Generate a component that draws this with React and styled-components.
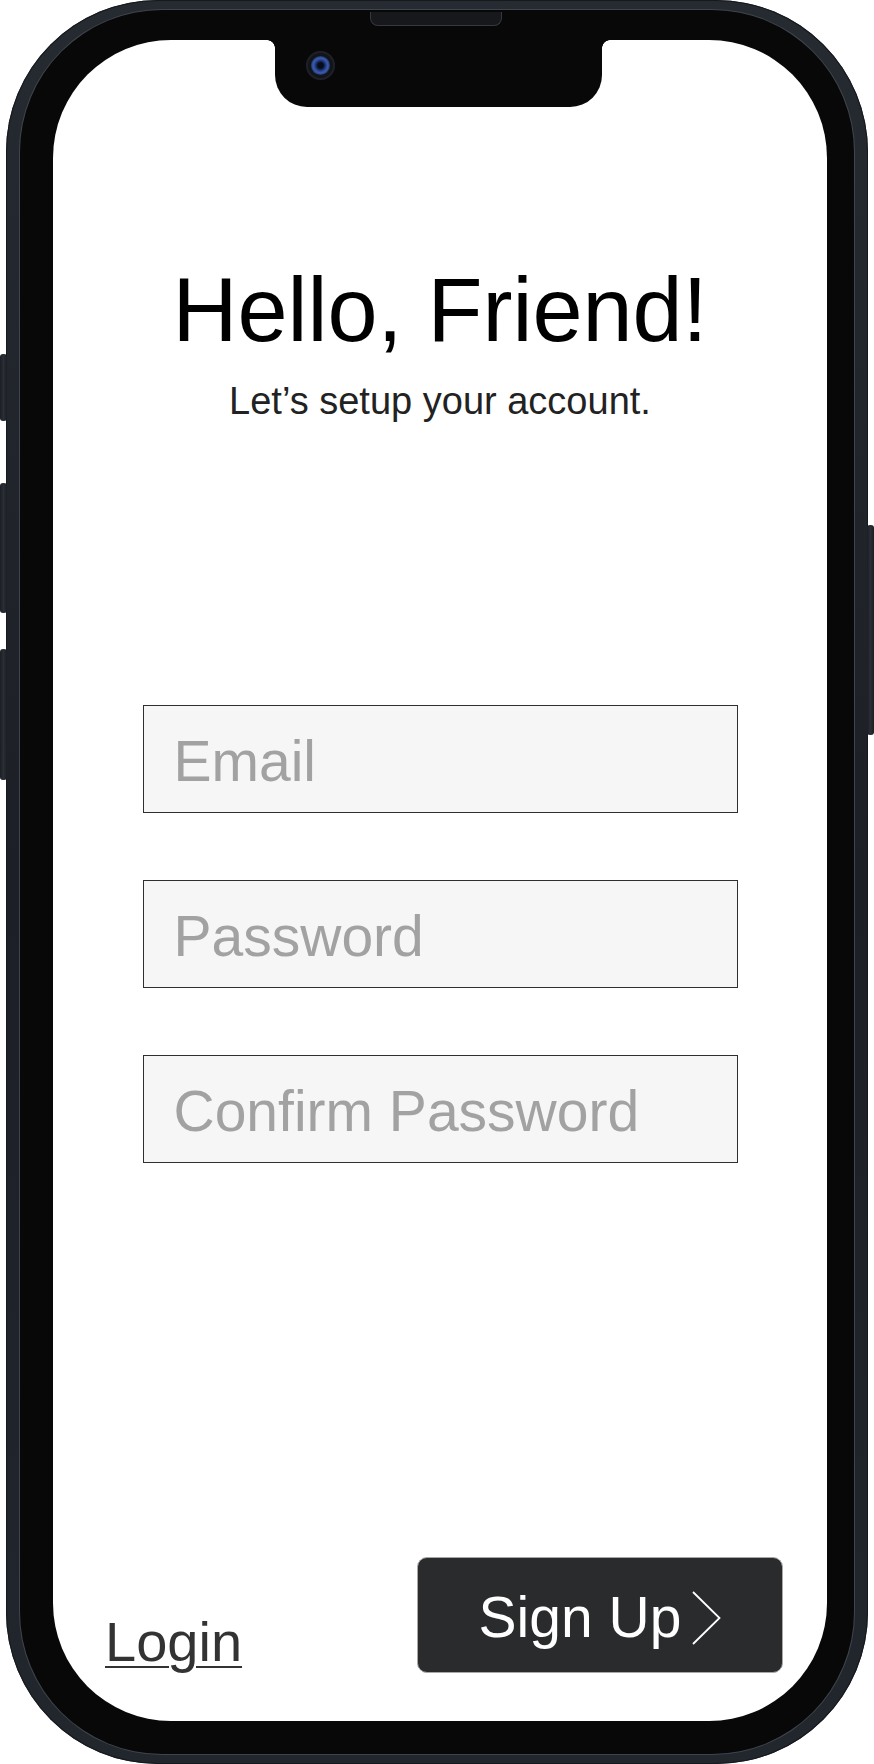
import React from "react";
import styled, { createGlobalStyle } from "styled-components";

const GlobalStyle = createGlobalStyle`
  html, body {
    margin: 0;
    padding: 0;
    background: #ffffff;
  }
  body {
    font-family: "Liberation Sans", Arial, Helvetica, sans-serif;
  }
  * { box-sizing: border-box; }
`;

const Page = styled.div`
  width: 874px;
  height: 1764px;
  display: flex;
  justify-content: center;
  background: #ffffff;
  overflow: hidden;
`;

const Phone = styled.div`
  position: relative;
  width: 862px;
  height: 1764px;
  border-radius: 152px;
  padding: 10px 14px 10px 14px;
  display: flex;
  background: linear-gradient(180deg, #262a31 0%, #1c2026 50%, #22262d 100%);
  box-shadow: inset 0 0 0 1px #15181c;
`;

const SideButton = styled.div`
  position: absolute;
  top: ${(p) => p.$top}px;
  height: ${(p) => p.$height}px;
  width: 7px;
  ${(p) => (p.$right ? "right: -6px;" : "left: -6px;")}
  border-radius: 3px;
  background: linear-gradient(90deg, #1b1e23, #2a2e35, #1b1e23);
`;

const Speaker = styled.div`
  position: absolute;
  top: 12px;
  left: 364px;
  width: 132px;
  height: 14px;
  border-radius: 0 0 8px 8px;
  background: #17181b;
  border: 1px solid #35383e;
  border-top: none;
  z-index: 3;
`;

const Bezel = styled.div`
  flex: 1;
  display: flex;
  border-radius: 142px;
  background: #080808;
  padding: 30px 27px 33px 33px;
  box-shadow: 0 0 0 1px #40454d;
`;

const Screen = styled.div`
  position: relative;
  flex: 1;
  display: flex;
  flex-direction: column;
  align-items: center;
  background: #ffffff;
  border-radius: 118px;
  padding: 225px 0 48px 0;
`;

const Notch = styled.div`
  position: absolute;
  top: 0;
  left: 222px;
  width: 327px;
  height: 67px;
  background: #080808;
  border-radius: 0 0 32px 32px;

  &::before,
  &::after {
    content: "";
    position: absolute;
    top: 0;
    width: 8px;
    height: 8px;
  }
  &::before {
    left: -8px;
    background: radial-gradient(circle at 0 100%, transparent 7.5px, #080808 8px);
  }
  &::after {
    right: -8px;
    background: radial-gradient(circle at 100% 100%, transparent 7.5px, #080808 8px);
  }
`;

const Camera = styled.div`
  position: absolute;
  left: 31px;
  top: 11px;
  width: 29px;
  height: 29px;
  border-radius: 50%;
  background: #121418;
  box-shadow: inset 0 0 0 2px #1d2026;
  display: flex;
  align-items: center;
  justify-content: center;
`;

const Lens = styled.div`
  width: 19px;
  height: 19px;
  border-radius: 50%;
  background: radial-gradient(circle at 50% 50%, #070b1c 0 20%, #27448e 42%, #3a5db0 55%, #15224a 78%, #080c1a 100%);
`;

const Title = styled.h1`
  margin: 0;
  font-family: "Liberation Sans", Arial, sans-serif;
  font-weight: 400;
  font-size: 90px;
  line-height: 1;
  color: #000000;
`;

const Subtitle = styled.p`
  margin: 27px 0 0 0;
  font-family: "Liberation Sans", Arial, sans-serif;
  font-weight: 400;
  font-size: 38px;
  line-height: 1;
  color: #222222;
`;

const Form = styled.div`
  margin-top: 285px;
  display: flex;
  flex-direction: column;
  gap: 67px;
`;

const Field = styled.div`
  width: 595px;
  height: 108px;
  display: flex;
  align-items: center;
  padding: 5px 0 0 30px;
  background: #f6f6f6;
  border: 1.5px solid #2f2f2f;
  font-family: "Liberation Sans", Arial, sans-serif;
  font-size: 57px;
  line-height: 1;
  color: #a2a2a2;
`;

const Footer = styled.div`
  margin-top: auto;
  align-self: stretch;
  display: flex;
  justify-content: space-between;
  align-items: flex-end;
  padding: 0 44px 0 52px;
`;

const LoginLink = styled.a`
  font-family: "Liberation Sans", Arial, sans-serif;
  font-size: 56px;
  line-height: 1;
  color: #333333;
  text-decoration: underline;
  text-decoration-thickness: 2px;
  text-underline-offset: 5px;
  margin-bottom: 3px;
  cursor: pointer;
`;

const SignUpButton = styled.button`
  width: 366px;
  height: 116px;
  display: flex;
  align-items: center;
  justify-content: center;
  gap: 11px;
  padding: 5px 0 0 0;
  border-radius: 10px;
  border: 1px solid #a8a8a8;
  background: #2a2b2d;
  color: #ffffff;
  font-family: "Liberation Sans", Arial, sans-serif;
  font-size: 57px;
  line-height: 1;
  cursor: pointer;
`;

const Chevron = () => (
  <svg width="29" height="54" viewBox="0 0 29 54" fill="none">
    <polyline points="1,1 27.5,27 1,53" stroke="#ffffff" strokeWidth="1.8" strokeLinejoin="miter" />
  </svg>
);

export default function App() {
  return (
    <>
      <GlobalStyle />
      <Page>
        <Phone>
          <SideButton $top={354} $height={67} />
          <SideButton $top={483} $height={130} />
          <SideButton $top={649} $height={131} />
          <SideButton $right $top={525} $height={210} />
          <Speaker />
          <Bezel>
            <Screen>
              <Notch>
                <Camera>
                  <Lens />
                </Camera>
              </Notch>
              <Title>Hello, Friend!</Title>
              <Subtitle>Let’s setup your account.</Subtitle>
              <Form>
                <Field>Email</Field>
                <Field>Password</Field>
                <Field>Confirm Password</Field>
              </Form>
              <Footer>
                <LoginLink>Login</LoginLink>
                <SignUpButton>
                  <span>Sign Up</span>
                  <Chevron />
                </SignUpButton>
              </Footer>
            </Screen>
          </Bezel>
        </Phone>
      </Page>
    </>
  );
}
